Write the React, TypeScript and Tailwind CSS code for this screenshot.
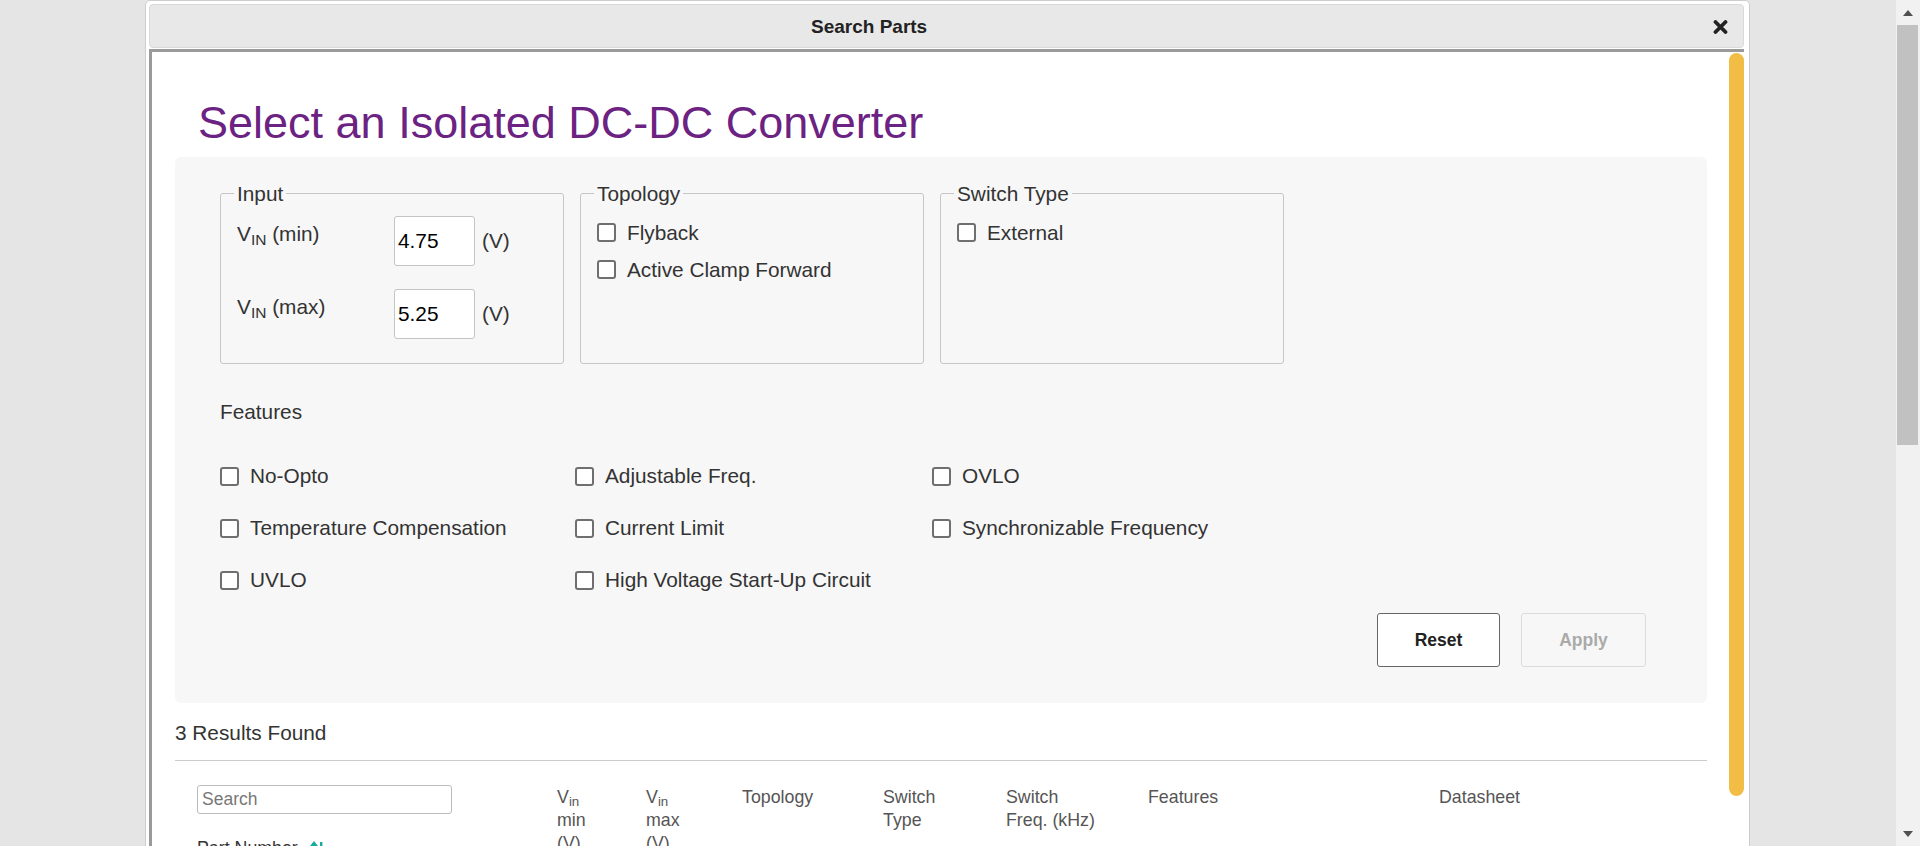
import React from 'react';

const Checkbox: React.FC<{ label: string }> = ({ label }) => (
  <label className="flex items-center h-[23px] text-[20.8px] text-[#333]">
    <span className="inline-block w-[19px] h-[19px] mr-[11px] border-2 border-[#6f6f6f] rounded-[3px] bg-white" />
    {label}
  </label>
);

const Group: React.FC<{ legend: string; children: React.ReactNode }> = ({ legend, children }) => (
  <fieldset className="w-[344px] h-[182px] border border-[#c6c6c6] rounded-[3px] pl-[16px]">
    <legend className="-ml-[3px] px-[3px] text-[20.8px] leading-[23px] text-[#333]">{legend}</legend>
    {children}
  </fieldset>
);

const VinRow: React.FC<{ kind: string; value: string; className?: string }> = ({ kind, value, className }) => (
  <div className={`flex items-start ${className ?? ''}`}>
    <div className="w-[157px] pt-[6px] text-[20.8px] leading-[23px] text-[#333]">
      V<sub className="text-[15.5px]">IN</sub> ({kind})
    </div>
    <input
      readOnly
      value={value}
      className="w-[81px] h-[50px] border border-[#c4c4c4] rounded-[3px] bg-white pl-[3px] text-[20.8px] text-black outline-none"
    />
    <span className="ml-[7px] self-center text-[20.8px] text-[#333]">(V)</span>
  </div>
);

const features = [
  'No-Opto',
  'Adjustable Freq.',
  'OVLO',
  'Temperature Compensation',
  'Current Limit',
  'Synchronizable Frequency',
  'UVLO',
  'High Voltage Start-Up Circuit',
];

const App: React.FC = () => {
  return (
    <div className="flex h-[846px] w-[1920px] overflow-hidden bg-[#e5e5e5] font-['Liberation_Sans',Arial,sans-serif]">
      <div className="pl-[145px]">
        <div className="flex flex-col w-[1605px] h-[900px] bg-white border border-[#cdcdcd] rounded-t-[5px] pt-[3px] pl-[3px] pr-[5px]">
          {/* title bar */}
          <div className="flex items-center justify-between h-[44px] bg-[#e8e8e8] border border-[#dadada] rounded-[4px] pt-[2px] pl-[661px] pr-[15px]">
            <span className="text-[19px] font-bold text-[#222]">Search Parts</span>
            <svg width="15" height="14" viewBox="0 0 15 14">
              <path d="M2.5 2 L12.5 12 M12.5 2 L2.5 12" stroke="#222" strokeWidth="3.8" strokeLinecap="round" />
            </svg>
          </div>

          <div className="flex flex-1 mt-[1px] border-l-[3px] border-t-[3px] border-[#9a9a9a]">
            <div className="flex-1 pl-[23px] pr-[22px]">
              <h1 className="mt-[45px] pl-[23px] text-[45px] leading-[52px] text-[#6c2282]">
                Select an Isolated DC-DC Converter
              </h1>

              <div className="mt-[8px] rounded-[6px] bg-[#f7f7f7] pt-[25px] pl-[45px] pr-[61px] pb-[36px]">
                <div className="flex gap-[16px]">
                  <Group legend="Input">
                    <VinRow kind="min" value="4.75" className="mt-[11px]" />
                    <VinRow kind="max" value="5.25" className="mt-[23px]" />
                  </Group>
                  <Group legend="Topology">
                    <div className="mt-[16px]">
                      <Checkbox label="Flyback" />
                    </div>
                    <div className="mt-[14px]">
                      <Checkbox label="Active Clamp Forward" />
                    </div>
                  </Group>
                  <Group legend="Switch Type">
                    <div className="mt-[16px]">
                      <Checkbox label="External" />
                    </div>
                  </Group>
                </div>

                <div className="mt-[36px] text-[20.8px] leading-[23px] text-[#333]">Features</div>
                <div className="mt-[27px] grid grid-cols-[355px_357px_356px]">
                  {features.map((f) => (
                    <div key={f} className="flex items-center h-[52px]">
                      <Checkbox label={f} />
                    </div>
                  ))}
                </div>

                <div className="mt-[7px] flex justify-end gap-[21px]">
                  <button className="w-[123px] h-[54px] rounded-[3px] border border-[#666] bg-white text-[17.5px] font-bold text-[#222]">
                    Reset
                  </button>
                  <button className="w-[125px] h-[54px] rounded-[3px] border border-[#dcdcdc] text-[17.5px] font-bold text-[#aaa]">
                    Apply
                  </button>
                </div>
              </div>

              <div className="mt-[18px] text-[20.8px] leading-[23px] text-[#333]">3 Results Found</div>
              <div className="mt-[16px] h-px bg-[#cccccc]" />

              <div className="mt-[24px] pl-[22px] grid grid-cols-[360px_89px_96px_141px_123px_142px_291px_1fr] items-start text-[17.8px] leading-[23px] text-[#555]">
                <div>
                  <input
                    placeholder="Search"
                    className="w-[255px] h-[29px] border border-[#bbb] rounded-[3px] px-[4px] text-[17.5px] bg-white placeholder:text-[#777] outline-none"
                  />
                  <div className="mt-[23px] flex items-center text-[#333]">
                    Part Number
                    <svg className="ml-[12px]" width="14" height="18" viewBox="0 0 14 18">
                      <path d="M4 1 L8 6 L5 6 L5 17 L3 17 L3 6 L0 6 Z" fill="#18a99b" />
                      <rect x="10" y="2" width="2.4" height="15" fill="#18a99b" />
                    </svg>
                  </div>
                </div>
                <div className="pt-[1px]">
                  V<sub>in</sub>
                  <br />
                  min
                  <br />
                  (V)
                </div>
                <div className="pt-[1px]">
                  V<sub>in</sub>
                  <br />
                  max
                  <br />
                  (V)
                </div>
                <div className="pt-[1px]">Topology</div>
                <div className="pt-[1px]">
                  Switch
                  <br />
                  Type
                </div>
                <div className="pt-[1px]">
                  Switch
                  <br />
                  Freq. (kHz)
                </div>
                <div className="pt-[1px]">Features</div>
                <div className="pt-[1px]">Datasheet</div>
              </div>
            </div>

            {/* inner scrollbar */}
            <div className="w-[15px] pt-[1px]">
              <div className="h-[743px] rounded-full bg-[#f2bd45]" />
            </div>
          </div>
        </div>
      </div>

      <div className="flex-1" />

      {/* page scrollbar */}
      <div className="flex flex-col w-[24px] h-full bg-[#f1f1f1]">
        <div className="flex h-[25px] items-center justify-center">
          <svg width="10" height="6" viewBox="0 0 10 6">
            <path d="M0 6 L5 0 L10 6 Z" fill="#505050" />
          </svg>
        </div>
        <div className="ml-[1px] mr-[2px] h-[420px] bg-[#c1c1c1]" />
        <div className="flex-1" />
        <div className="flex h-[25px] items-center justify-center">
          <svg width="10" height="6" viewBox="0 0 10 6">
            <path d="M0 0 L5 6 L10 0 Z" fill="#505050" />
          </svg>
        </div>
      </div>
    </div>
  );
};

export default App;
